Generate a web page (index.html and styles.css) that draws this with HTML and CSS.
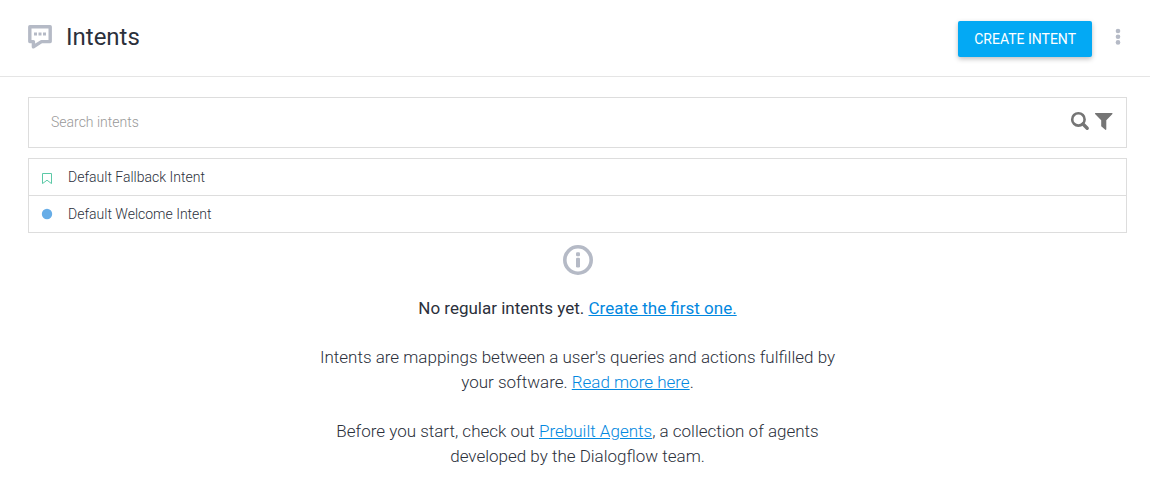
FILE: index.html
```html
<!DOCTYPE html>
<html lang="en">
<head>
<meta charset="utf-8">
<meta name="viewport" content="width=device-width, initial-scale=1">
<title>Intents</title>
<link rel="stylesheet" href="styles.css">
</head>
<body>
<header class="header">
  <svg class="header-icon" width="26" height="26" viewBox="0 0 26 26" aria-hidden="true">
    <path d="M2.8 2.8H23.2V17.6H14.5L6.4 22.8V17.6H2.8Z" fill="none" stroke="#b5bac6" stroke-width="3.4" stroke-linejoin="round"/>
    <path d="M7 8.5h3v3H7zM11.5 8.5h3v3h-3zM16 8.5h3v3h-3z" fill="#b5bac6"/>
  </svg>
  <h1 class="title">Intents</h1>
  <button class="create" type="button">CREATE INTENT</button>
  <button class="more" type="button" aria-label="More options">
    <svg width="6" height="18" viewBox="0 0 6 18" aria-hidden="true"><g fill="#b5bac6"><circle cx="3" cy="3" r="2.3"/><circle cx="3" cy="8.7" r="2.3"/><circle cx="3" cy="14.4" r="2.3"/></g></svg>
  </button>
</header>
<main class="content">
  <form class="search">
    <input class="search-input" type="text" placeholder="Search intents" aria-label="Search intents">
    <button class="tool" type="submit" aria-label="Search">
      <svg width="20" height="20" viewBox="0 0 20 20" aria-hidden="true"><g fill="none" stroke="#757575"><circle cx="8.4" cy="8.4" r="6.2" stroke-width="2.6"/><path d="M13 13L17.2 17.2" stroke-width="3.4" stroke-linecap="round"/></g></svg>
    </button>
    <button class="tool" type="button" aria-label="Filter">
      <svg width="20" height="20" viewBox="0 0 20 20" aria-hidden="true"><path d="M1.3 2H18.2Q18.9 2.6 18.2 3.2L12.3 9.3V18.6L11.6 19L7.2 15.2V9.3L1.3 3.2Q.6 2.6 1.3 2Z" fill="#757575"/></svg>
    </button>
  </form>
  <ul class="intents">
    <li class="intent">
      <svg width="12" height="14" viewBox="0 0 12 14" aria-hidden="true"><path d="M1.5 3.5H10.5V13.6L6 10.2L1.5 13.6Z" fill="none" stroke="#5cc9a7"/></svg>
      <span>Default Fallback Intent</span>
    </li>
    <li class="intent">
      <svg width="12" height="14" viewBox="0 0 12 14" aria-hidden="true"><circle cx="6" cy="7" r="5.2" fill="#67ade7"/></svg>
      <span>Default Welcome Intent</span>
    </li>
  </ul>
  <section class="empty">
    <svg class="info" width="30" height="30" viewBox="0 0 30 30" aria-hidden="true">
      <circle cx="15" cy="15" r="13.2" fill="none" stroke="#b5bac6" stroke-width="3.6"/>
      <rect x="13" y="7.2" width="4" height="4" rx="1.2" fill="#b5bac6"/><rect x="13" y="12.8" width="4" height="9.6" rx="1.2" fill="#b5bac6"/>
    </svg>
    <p class="lead">No regular intents yet. <a href="#create">Create the first one.</a></p>
    <p>Intents are mappings between a user's queries and actions fulfilled by your software. <a href="#docs">Read more here</a>.</p>
    <p>Before you start, check out <a href="#agents">Prebuilt Agents</a>, a collection of agents developed by the Dialogflow team.</p>
  </section>
</main>
</body>
</html>
```

FILE: styles.css
```css
* {
  box-sizing: border-box;
}

body {
  margin: 0;
  background: #fff;
  color: #2b303b;
  font-family: Roboto, "Liberation Sans", sans-serif;
  font-size: 14px;
  font-weight: 300;
}

button {
  font-family: inherit;
  border: 0;
  padding: 0;
  cursor: pointer;
}

svg {
  display: block;
  flex: none;
}

.header {
  display: flex;
  align-items: center;
  height: 77px;
  padding: 0 29px 0 27px;
  border-bottom: 1px solid #e5e5e5;
}

.title {
  flex: 1;
  margin: 0 0 2px 13px;
  font-size: 24px;
  font-weight: 400;
}

.header-icon {
  margin-bottom: 3px;
}

.create {
  height: 36px;
  margin-top: 2px;
  padding: 0 16px;
  border-radius: 2px;
  background: #03a9f4;
  box-shadow: 0 2px 5px rgba(0, 0, 0, 0.26);
  color: #fff;
  font-size: 14px;
  font-weight: 400;
}

.more {
  margin: 0 0 2px 23px;
  background: none;
}

.content {
  padding: 20px 23px 12px 28px;
}

.search {
  display: flex;
  align-items: center;
  gap: 4px;
  height: 51px;
  padding: 0 12px 2px 22px;
  border: 1px solid #ddd;
}

.search-input {
  flex: 1;
  min-width: 0;
  padding: 0;
  border: 0;
  outline: 0;
  background: none;
  color: inherit;
  font: inherit;
}

.search-input::placeholder {
  color: #999;
}

.tool {
  margin-bottom: 2px;
  background: none;
}

.intents {
  margin: 10px 0 0;
  padding: 0;
  list-style: none;
  border: 1px solid #ddd;
}

.intent {
  display: flex;
  align-items: center;
  gap: 15px;
  height: 36px;
  padding-left: 12px;
}

.intent + .intent {
  height: 37px;
  border-top: 1px solid #ddd;
}

.empty {
  max-width: 520px;
  margin: 12px auto 0;
  font-size: 17px;
  line-height: 25px;
  text-align: center;
}

.empty p {
  margin: 0 0 24px;
}

.empty p:last-child {
  margin-bottom: 0;
}

.empty .info {
  margin: 0 auto 21px;
}

.empty .lead {
  font-weight: 400;
}

a {
  color: #0288e0;
}
```
